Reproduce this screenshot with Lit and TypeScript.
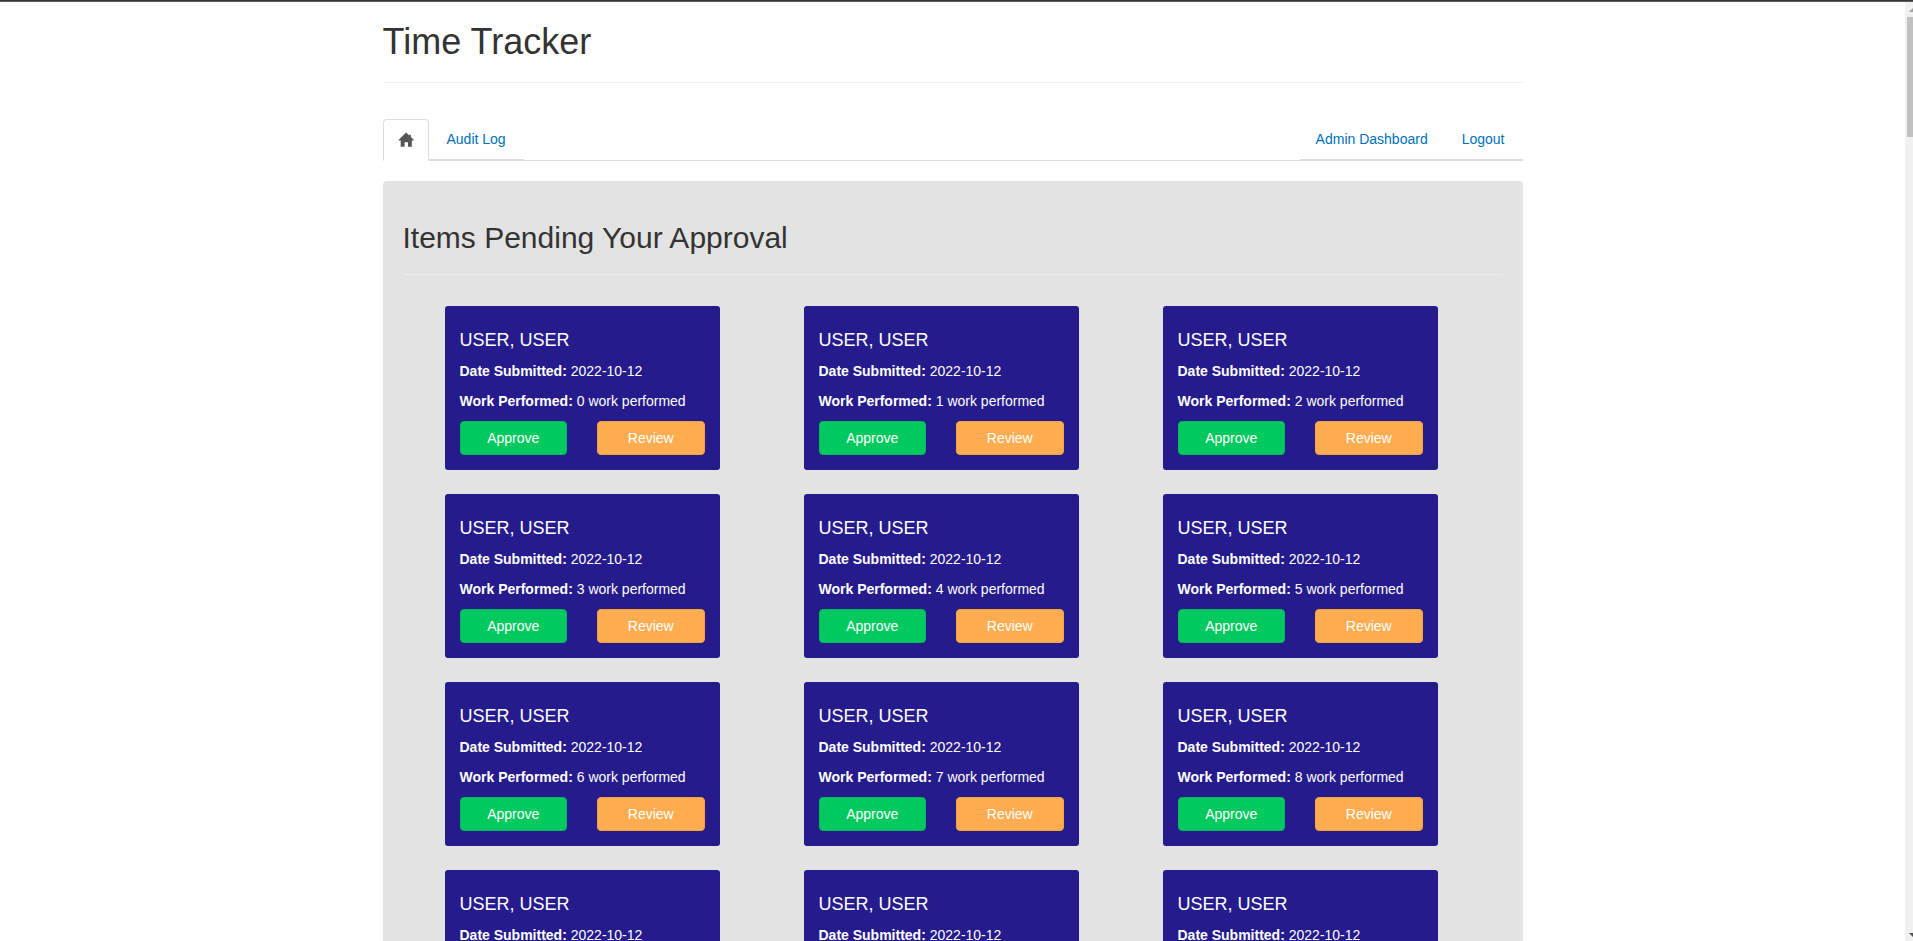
import { LitElement, html, css } from "lit";
import { customElement, property } from "lit/decorators.js";

interface PendingItem {
  name: string;
  submitted: string;
  work: string;
}

const ITEMS: PendingItem[] = Array.from({ length: 12 }, (_, i) => ({
  name: "USER, USER",
  submitted: "2022-10-12",
  work: `${i} work performed`,
}));

@customElement("approval-card")
class ApprovalCard extends LitElement {
  @property({ attribute: false }) item!: PendingItem;

  static styles = css`
    :host {
      display: block;
      padding: 15px;
      border-radius: 3px;
      background: #251b8d;
      color: #fff;
    }
    .name {
      margin: 10px 0 12px;
      font-size: 18px;
      font-weight: 500;
      line-height: 18px;
    }
    .line {
      margin: 0 0 10px;
    }
    .actions {
      display: grid;
      grid-template-columns: 1fr 1fr;
      gap: 30px;
    }
    .btn {
      padding: 6px 12px;
      border: 1px solid;
      border-radius: 4px;
      color: #fff;
      font: inherit;
      cursor: pointer;
    }
    .approve {
      background: #00c960;
      border-color: #00b956;
    }
    .review {
      background: #ffad50;
      border-color: #ffa236;
    }
  `;

  render() {
    return html`
      <h4 class="name">${this.item.name}</h4>
      <p class="line"><strong>Date Submitted:</strong> ${this.item.submitted}</p>
      <p class="line"><strong>Work Performed:</strong> ${this.item.work}</p>
      <div class="actions">
        <button class="btn approve" type="button">Approve</button>
        <button class="btn review" type="button">Review</button>
      </div>
    `;
  }
}

@customElement("app-root")
class AppRoot extends LitElement {
  static styles = css`
    :host {
      display: flex;
      flex-direction: column;
      height: 100vh;
      overflow: hidden;
      background: #fff;
      color: #333;
      font-family: "Liberation Sans", Arial, sans-serif;
      font-size: 14px;
      line-height: 20px;
    }
    * {
      box-sizing: border-box;
    }
    .topline {
      flex: none;
      height: 2px;
      background: #38353b;
      border-bottom: 1px solid #5d5a60;
    }
    .frame {
      display: flex;
      flex: 1;
      min-height: 0;
    }
    .page {
      flex: 1;
      min-width: 0;
      overflow: hidden;
    }
    .container {
      max-width: 1140px;
      margin: 0 auto;
    }
    .page-header {
      padding: 20px 0;
      border-bottom: 1px solid #eee;
    }
    .title,
    .subtitle {
      margin: 0;
      font-weight: 500;
    }
    .title {
      font-size: 36px;
      line-height: 40px;
    }
    .subtitle {
      font-size: 30px;
      line-height: 33px;
    }
    .tabs {
      display: flex;
      margin: 36px 0 20px;
      padding: 0;
      list-style: none;
      border-bottom: 1px solid #ddd;
    }
    .tab {
      height: 41px;
      padding-right: 2px;
      border-bottom: 1px solid #ddd;
    }
    .push {
      margin-left: auto;
    }
    .link {
      display: block;
      height: 42px;
      padding: 9px 15px;
      border: 1px solid transparent;
      border-radius: 4px 4px 0 0;
      color: #0071bc;
      text-decoration: none;
    }
    .active {
      background: #fff;
      border-color: #ddd;
      border-bottom-color: transparent;
      color: #555;
    }
    .home {
      display: block;
      width: 14px;
      height: 14px;
      margin-top: 4px;
      fill: currentColor;
      overflow: visible;
    }
    .well {
      padding: 20px;
      border-radius: 4px;
      background: #e3e3e3;
    }
    .grid {
      display: grid;
      grid-template-columns: repeat(3, minmax(0, 1fr));
      gap: 24px 84px;
      padding: 31px 65px 0 42px;
    }
    .scrollbar {
      display: flex;
      flex-direction: column;
      flex: none;
      width: 8px;
      padding-bottom: 3px;
      background: #f1f1f1;
    }
    .arrow {
      display: block;
      flex: none;
      width: 8px;
      height: 15px;
    }
    .up {
      fill: #a3a3a3;
    }
    .down {
      margin-top: auto;
      fill: #505050;
    }
    .thumb {
      height: 120px;
      margin-left: 2px;
      background: #c1c1c1;
    }
  `;

  render() {
    return html`
      <div class="topline"></div>
      <div class="frame">
        <div class="page">
          <div class="container">
            <header class="page-header"><h1 class="title">Time Tracker</h1></header>
            <nav>
              <ul class="tabs">
                <li class="tab">
                  <a class="link active" href="#" aria-label="Home">
                    <svg class="home" viewBox="0 0 14 14" aria-hidden="true">
                      <path d="M7.2 -.4 L10.2 2.4 V1.8 H11.9 V4.1 L14.7 6.8 V7.4 H12.8 V13.8 H9 V9.2 H5.6 V13.8 H1.7 V7.4 H-.3 V6.8 Z"></path>
                    </svg>
                  </a>
                </li>
                <li class="tab"><a class="link" href="#">Audit Log</a></li>
                <li class="tab push"><a class="link" href="#">Admin Dashboard</a></li>
                <li class="tab"><a class="link" href="#">Logout</a></li>
              </ul>
            </nav>
            <main class="well">
              <header class="page-header"><h2 class="subtitle">Items Pending Your Approval</h2></header>
              <section class="grid">
                ${ITEMS.map((item) => html`<approval-card .item=${item}></approval-card>`)}
              </section>
            </main>
          </div>
        </div>
        <div class="scrollbar" aria-hidden="true">
          <svg class="arrow up" viewBox="0 0 8 15"><path d="M4 10 L8 6 V10 Z"></path></svg>
          <div class="thumb"></div>
          <svg class="arrow down" viewBox="0 0 8 15"><path d="M4 10 H8 V14 Z"></path></svg>
        </div>
      </div>
    `;
  }
}
